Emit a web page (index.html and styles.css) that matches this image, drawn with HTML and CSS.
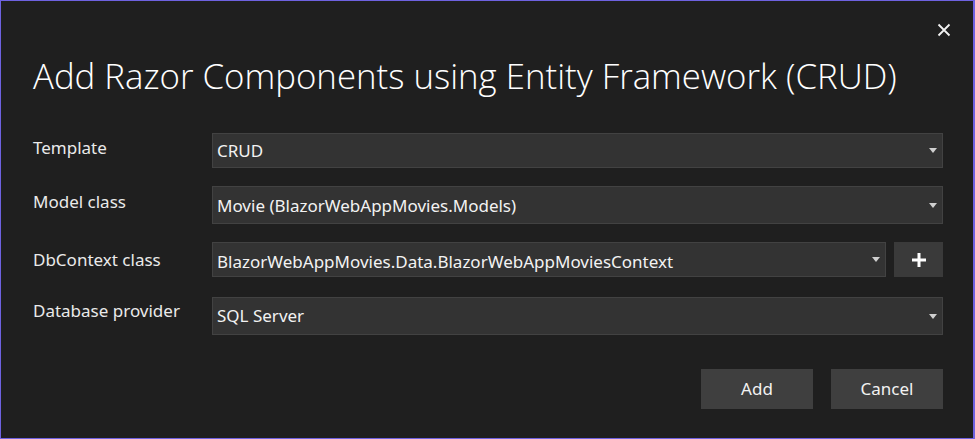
FILE: index.html
```html
<!DOCTYPE html>
<html lang="en">
<head>
<meta charset="utf-8">
<title>Add Razor Components using Entity Framework (CRUD)</title>
<link rel="stylesheet" href="styles.css">
</head>
<body>
<div class="dialog">
  <div class="dialog-head">
    <button class="close" type="button" aria-label="Close">
      <svg width="14" height="14" viewBox="0 0 14 14"><path d="M1.5 1.5 L12.5 12.5 M12.5 1.5 L1.5 12.5" stroke="#f2f2f2" stroke-width="1.8" fill="none"/></svg>
    </button>
  </div>
  <h1 class="title">Add Razor Components using Entity Framework (CRUD)</h1>

  <div class="form">
    <div class="row row-template">
      <label class="label">Template</label>
      <div class="combo"><span class="value">CRUD</span><span class="arrow"></span></div>
    </div>
    <div class="row row-model">
      <label class="label">Model class</label>
      <div class="combo"><span class="value">Movie (BlazorWebAppMovies.Models)</span><span class="arrow"></span></div>
    </div>
    <div class="row row-context">
      <label class="label">DbContext class</label>
      <div class="field-with-add">
        <div class="combo"><span class="value">BlazorWebAppMovies.Data.BlazorWebAppMoviesContext</span><span class="arrow"></span></div>
        <button class="add-btn" type="button" aria-label="Add">
          <svg width="16" height="16" viewBox="0 0 16 16"><path d="M8 1 V15 M1 8 H15" stroke="#ffffff" stroke-width="3" fill="none"/></svg>
        </button>
      </div>
    </div>
    <div class="row row-provider">
      <label class="label">Database provider</label>
      <div class="combo"><span class="value">SQL Server</span><span class="arrow"></span></div>
    </div>
  </div>

  <div class="actions">
    <button class="btn" type="button">Add</button>
    <button class="btn" type="button">Cancel</button>
  </div>
</div>
</body>
</html>
```

FILE: styles.css
```css
html, body {
  margin: 0;
  padding: 0;
  background: #1f1f1f;
}

* {
  box-sizing: border-box;
}

.dialog {
  width: 975px;
  height: 439px;
  background: #1f1f1f;
  border-style: solid;
  border-color: #6e62e0;
  border-width: 1px 2px 1px 1px;
  padding: 0 30px 0 32px;
  font-family: "Noto Sans", "Open Sans", sans-serif;
  color: #f0f0f0;
}

.dialog-head {
  display: flex;
  justify-content: flex-end;
  height: 46px;
  padding-top: 13px;
  margin-right: -17px;
}

.close {
  width: 32px;
  height: 32px;
  padding: 0;
  border: none;
  background: transparent;
  display: flex;
  align-items: center;
  justify-content: center;
}

.title {
  margin: 4px 0 0 0;
  font-family: "Open Sans", sans-serif;
  font-weight: 300;
  font-size: 34.8px;
  line-height: 50px;
  color: #ffffff;
  white-space: nowrap;
}

.form {
  margin-top: 32px;
}

.row {
  display: grid;
  grid-template-columns: 179px 1fr;
  align-items: center;
}

.row-template { height: 35px; }
.row-model { height: 38px; margin-top: 18px; }
.row-context { height: 35px; margin-top: 18px; }
.row-provider { height: 38px; margin-top: 20px; }

.label {
  font-size: 17px;
  color: #eaeaea;
  margin-top: -7px;
}

.row-context .label {
  margin-top: 0;
}

.row-provider .label {
  margin-top: -11px;
}

.combo {
  height: 100%;
  display: flex;
  align-items: center;
  justify-content: space-between;
  background: #333333;
  border: 1px solid #424242;
  padding: 0 4px 0 4px;
  font-size: 17px;
  color: #f2f2f2;
}

.value {
  padding-top: 0;
}

.row-context .value {
  padding-top: 3px;
}

.row-provider .value {
  padding-bottom: 2px;
}

.arrow {
  width: 0;
  height: 0;
  border-left: 4.5px solid transparent;
  border-right: 4.5px solid transparent;
  border-top: 5px solid #cfcfcf;
  margin-right: 1px;
}

.field-with-add {
  height: 100%;
  display: flex;
  gap: 8px;
}

.field-with-add .combo {
  flex: 1;
}

.add-btn {
  width: 49px;
  height: 100%;
  border: none;
  background: #3a3a3a;
  display: flex;
  align-items: center;
  justify-content: center;
  padding: 0;
}

.actions {
  display: flex;
  justify-content: flex-end;
  gap: 18px;
  margin-top: 34px;
}

.btn {
  width: 112px;
  height: 40px;
  border: none;
  background: #3f3f3f;
  color: #f2f2f2;
  font-family: "Noto Sans", "Open Sans", sans-serif;
  font-size: 17px;
  padding: 0 0 2px 0;
}
```
